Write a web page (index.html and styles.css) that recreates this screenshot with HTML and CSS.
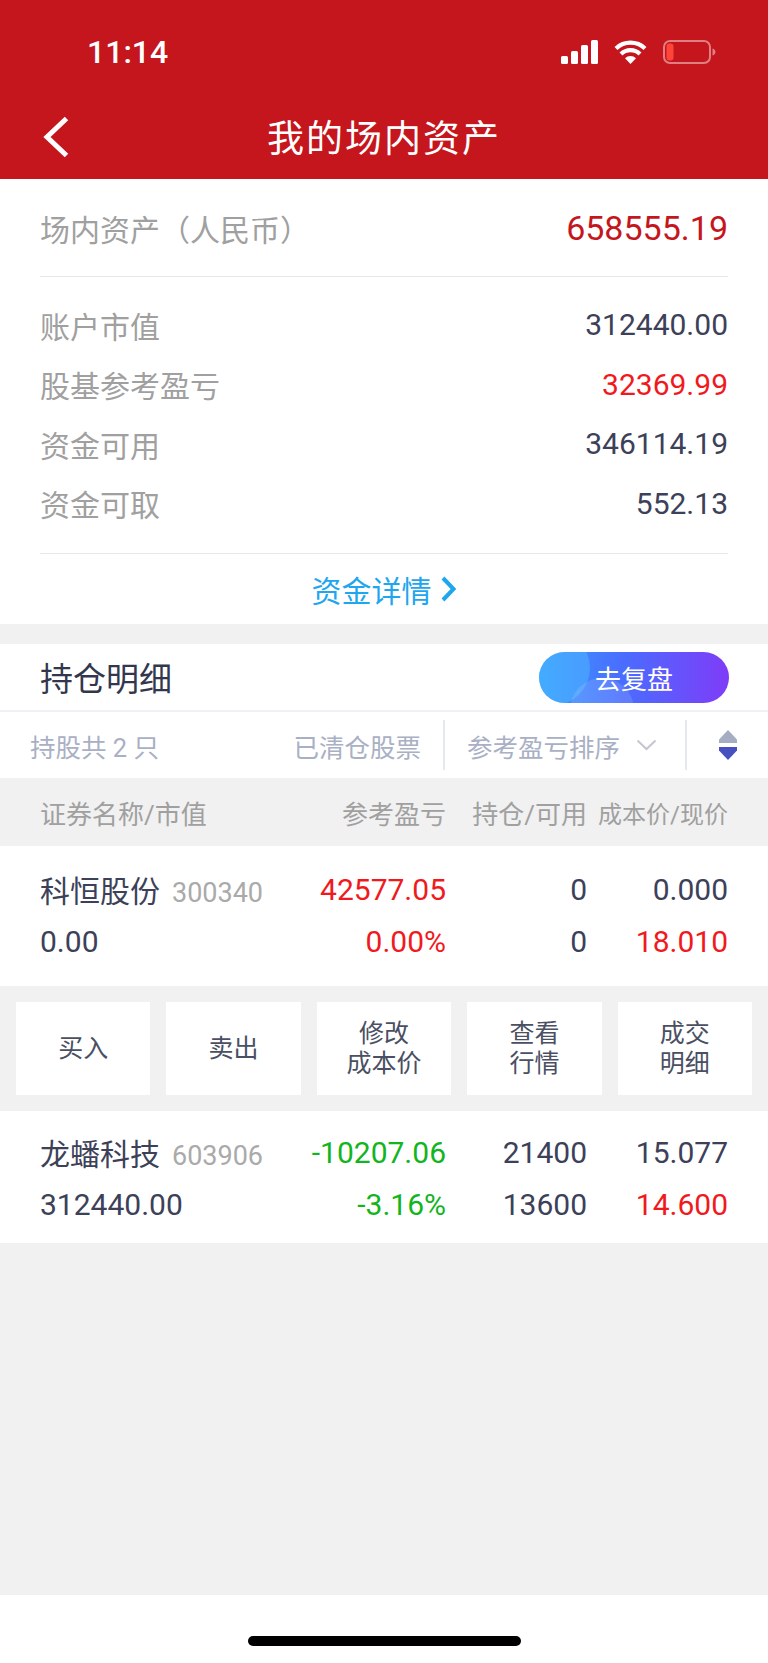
FILE: index.html
```html
<!DOCTYPE html>
<html lang="zh-CN">
<head>
  <meta charset="UTF-8">
  <meta name="viewport" content="width=device-width, initial-scale=1.0">
  <title>我的场内资产</title>
  <link rel="stylesheet" href="styles.css">
</head>
<body>

  <header class="top">
    <div class="status">
      <span class="time">11:14</span>
      <div class="status-icons">
        <svg width="37" height="24" viewBox="0 0 37 24">
          <rect x="0" y="16" width="7" height="8" rx="1.5" fill="#fff"/>
          <rect x="10" y="11" width="7" height="13" rx="1.5" fill="#fff"/>
          <rect x="20" y="5" width="7" height="19" rx="1.5" fill="#fff"/>
          <rect x="30" y="0" width="7" height="24" rx="1.5" fill="#fff"/>
        </svg>
        <svg width="33" height="24" viewBox="0 0 33 24">
          <path d="M2 8.5a21 21 0 0 1 29 0M7 14a13.5 13.5 0 0 1 19 0" fill="none" stroke="#fff" stroke-width="4.2"/>
          <path d="M11 18.2a8 8 0 0 1 11 0L16.500 24z" fill="#fff"/>
        </svg>
        <svg width="53" height="24" viewBox="0 0 53 24">
          <rect x="1" y="1" width="46" height="22" rx="6" fill="none" stroke="#fff" stroke-opacity=".45" stroke-width="2"/>
          <rect x="3.500" y="3.500" width="7" height="17" rx="3" fill="#ff453a"/>
          <path d="M49.500 8.500c2 .6 3 2 3 3.500s-1 2.900-3 3.500z" fill="#fff" fill-opacity=".45"/>
        </svg>
      </div>
    </div>
    <nav class="nav">
      <svg class="back" width="26" height="42" viewBox="0 0 26 42">
        <path d="M23.500 2.500L4 21l19.500 18.500" fill="none" stroke="#fff" stroke-width="5"/>
      </svg>
      <h1>我的场内资产</h1>
    </nav>
  </header>

  <!-- Assets summary -->
  <section class="assets">
    <div class="assets-total">
      <span class="total-label">场内资产（人民币）</span>
      <span class="total-value">658555.19</span>
    </div>
    <div class="assets-list">
      <div class="asset-row"><span>账户市值</span><b>312440.00</b></div>
      <div class="asset-row"><span>股基参考盈亏</span><b class="up">32369.99</b></div>
      <div class="asset-row"><span>资金可用</span><b>346114.19</b></div>
      <div class="asset-row"><span>资金可取</span><b>552.13</b></div>
    </div>
    <div class="assets-link">
      资金详情
      <svg width="17" height="26" viewBox="0 0 17 26">
        <path d="M3 2l10.500 11L3 24" fill="none" stroke="#1ea6ee" stroke-width="4"/>
      </svg>
    </div>
  </section>

  <!-- Holdings -->
  <section class="holdings">
    <div class="holdings-head">
      <h2>持仓明细</h2>
      <div class="review-btn"><span>去复盘</span></div>
    </div>

    <div class="filters">
      <span class="count">持股共 2 只</span>
      <span class="filter filter-cleared">已清仓股票</span>
      <span class="filter filter-sort">
        参考盈亏排序
        <svg width="21" height="12" viewBox="0 0 21 12">
          <path d="M1.500 1.500l9 8.500 9-8.500" fill="none" stroke="#c4c7cf" stroke-width="2"/>
        </svg>
      </span>
      <span class="filter filter-order">
        <svg width="18" height="30" viewBox="0 0 18 30">
          <path d="M9 0l9 9.500V13H0V9.500z" fill="#a6adc2"/>
          <path d="M0 17h18v3.500L9 30 0 20.500z" fill="#4650c0"/>
        </svg>
      </span>
    </div>

    <div class="table-head">
      <span>证券名称/市值</span>
      <span class="num">参考盈亏</span>
      <span class="num">持仓/可用</span>
      <span class="num small">成本价/现价</span>
    </div>

    <div class="stock stock-first">
      <div class="cell"><span class="name">科恒股份</span><span class="code">300340</span></div>
      <div class="cell num up">42577.05</div>
      <div class="cell num">0</div>
      <div class="cell num">0.000</div>
      <div class="cell">0.00</div>
      <div class="cell num up">0.00%</div>
      <div class="cell num">0</div>
      <div class="cell num up">18.010</div>
    </div>

    <div class="actions">
      <div class="action">买入</div>
      <div class="action">卖出</div>
      <div class="action">修改<br>成本价</div>
      <div class="action">查看<br>行情</div>
      <div class="action">成交<br>明细</div>
    </div>

    <div class="stock stock-second">
      <div class="cell"><span class="name">龙蟠科技</span><span class="code">603906</span></div>
      <div class="cell num down">-10207.06</div>
      <div class="cell num">21400</div>
      <div class="cell num">15.077</div>
      <div class="cell">312440.00</div>
      <div class="cell num down">-3.16%</div>
      <div class="cell num">13600</div>
      <div class="cell num up">14.600</div>
    </div>
  </section>

  <div class="spacer"></div>

  <footer class="home-bar"><div class="home-indicator"></div></footer>

</body>
</html>
```

FILE: styles.css
```css
* {
  margin: 0;
  padding: 0;
  box-sizing: border-box;
}

body {
  font-family: Roboto, 'Noto Sans CJK SC', sans-serif;
  display: flex;
  flex-direction: column;
  height: 1663px;
  background-color: #f1f1f1;
  color: #3c4159;
  overflow: hidden;
}

h1, h2 {
  font-weight: 400;
}

.up {
  color: #f01a1e;
}

.down {
  color: #12b51d;
}

.num {
  text-align: right;
}

/* Red header */
.top {
  height: 179px;
  background-color: #c5161d;
  color: #fff;
}

.status {
  height: 104px;
  display: flex;
  justify-content: space-between;
  align-items: center;
  padding: 0 52px 0 87px;
}

.time {
  font-size: 32px;
  font-weight: 500;
}

.status-icons {
  display: flex;
  align-items: center;
  gap: 16px;
}

.nav {
  height: 63px;
  display: flex;
  justify-content: center;
  align-items: center;
  position: relative;
}

.nav h1 {
  font-size: 37px;
  letter-spacing: 2px;
}

.back {
  position: absolute;
  left: 43px;
  top: 12px;
}

/* Assets summary */
.assets {
  background-color: #fff;
  padding: 0 40px;
  height: 445px;
  display: flex;
  flex-direction: column;
}

.assets-total {
  height: 98px;
  display: flex;
  justify-content: space-between;
  align-items: center;
  border-bottom: 1px solid #e8e8e8;
}

.total-label {
  font-size: 30px;
  color: #a0a0a0;
}

.total-value {
  font-size: 34px;
  color: #c5161d;
}

.assets-list {
  height: 277px;
  padding-top: 18px;
  border-bottom: 1px solid #e8e8e8;
}

.asset-row {
  height: 59.500px;
  display: flex;
  justify-content: space-between;
  align-items: center;
  font-size: 30px;
  color: #a0a0a0;
}

.asset-row b {
  font-weight: 400;
  color: #3c4159;
}

.asset-row b.up {
  color: #f01a1e;
}

.assets-link {
  flex: 1;
  display: flex;
  justify-content: center;
  align-items: center;
  gap: 8px;
  font-size: 30px;
  color: #1ea6ee;
}

/* Holdings */
.holdings {
  margin-top: 20px;
}

.holdings-head {
  height: 68px;
  background-color: #fff;
  padding: 0 39px 0 40px;
  display: flex;
  justify-content: space-between;
  align-items: center;
  border-bottom: 2px solid #f0f0f5;
}

.holdings-head h2 {
  font-size: 33px;
  color: #33374e;
}

.review-btn {
  width: 190px;
  height: 51px;
  border-radius: 26px;
  background: linear-gradient(90deg, #3a9cff 0%, #4a6cff 45%, #7f3cf8 100%);
  color: #fff;
  font-size: 26px;
  display: flex;
  justify-content: center;
  align-items: center;
  position: relative;
  overflow: hidden;
}

.review-btn span {
  position: relative;
}

.review-btn::before {
  content: '';
  position: absolute;
  left: -25px;
  top: -22px;
  width: 76px;
  height: 76px;
  border-radius: 50%;
  background-color: rgba(80, 190, 255, 0.45);
}

.review-btn::after {
  content: '';
  position: absolute;
  left: 31px;
  top: 26px;
  width: 64px;
  height: 64px;
  border-radius: 50%;
  background-color: rgba(255, 255, 255, 0.12);
}

.filters {
  height: 66px;
  background-color: #fff;
  display: flex;
  align-items: center;
  font-size: 25.500px;
  color: #a9b0c4;
  padding-left: 30px;
}

.count {
  margin-right: auto;
}

.filter {
  height: 50px;
  display: flex;
  align-items: center;
}

.filter-cleared {
  padding-right: 22px;
}

.filter-sort {
  width: 244px;
  padding-left: 22px;
  gap: 16px;
  border-left: 2px solid #e6e8ef;
  border-right: 2px solid #e6e8ef;
}

.filter-order {
  width: 81px;
  justify-content: center;
}

.table-head {
  height: 68px;
  padding: 0 40px;
  display: grid;
  grid-template-columns: 240px 166px 141px 141px;
  align-items: center;
  font-size: 26px;
  color: #a0a0a0;
}

.table-head .small {
  font-size: 24px;
}

.stock {
  background-color: #fff;
  padding: 0 40px;
  display: grid;
  grid-template-columns: 240px 166px 141px 141px;
  grid-auto-rows: 52px;
  align-items: center;
  font-size: 30px;
}

.stock-first {
  height: 140px;
  padding-top: 17px;
}

.stock-second {
  height: 132px;
  padding-top: 15px;
}

.cell {
  white-space: nowrap;
}

.code {
  margin-left: 12px;
  font-size: 27px;
  color: #aaa;
}

.actions {
  display: grid;
  grid-template-columns: repeat(5, 1fr);
  gap: 16px;
  padding: 16px;
  height: 125px;
}

.action {
  background-color: #fff;
  display: flex;
  justify-content: center;
  align-items: center;
  text-align: center;
  font-size: 25px;
  line-height: 30px;
  color: #4a4f63;
}

.spacer {
  flex: 1;
}

/* Home indicator strip */
.home-bar {
  height: 68px;
  background-color: #fff;
  display: flex;
  justify-content: center;
  padding-top: 41px;
}

.home-indicator {
  width: 273px;
  height: 10px;
  border-radius: 5px;
  background-color: #000;
}
```
